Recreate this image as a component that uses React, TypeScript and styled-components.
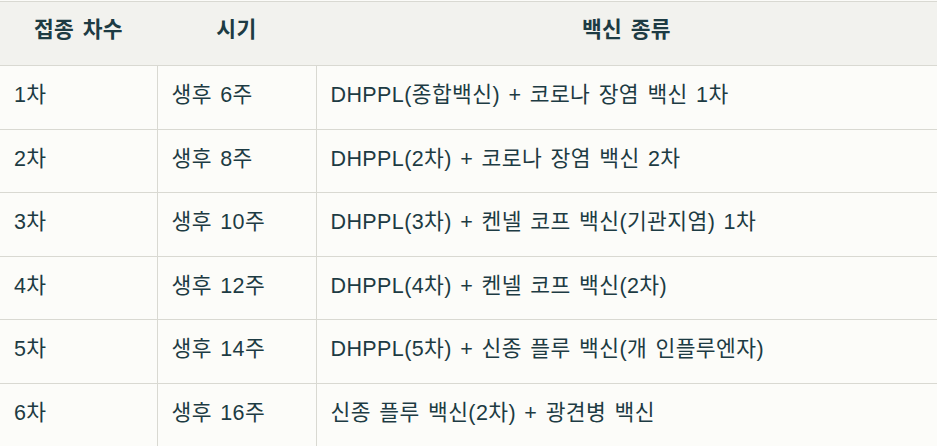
import styled, { createGlobalStyle } from "styled-components";

const GlobalStyle = createGlobalStyle`
    html, body {
        margin: 0;
        padding: 0;
        background: #fbfbf8;
    }
    body {
        font-family: "Liberation Sans", "Noto Sans CJK KR", sans-serif;
        color: #1d3b43;
    }
`;

const Wrapper = styled.div`
    padding-top: 1px;
    width: 100%;
    overflow: hidden;
`;

const Table = styled.table`
    width: 100%;
    border-collapse: collapse;
    table-layout: fixed;
    font-size: 21.5px;
    letter-spacing: 0.4px;
    word-spacing: 2px;
`;

const HeadCell = styled.th<{ $width?: number }>`
    box-sizing: border-box;
    width: ${p => (p.$width ? `${p.$width}px` : "auto")};
    background: #f2f2ee;
    font-weight: bold;
    text-align: center;
    padding: 17px 14px 23px;
    line-height: 23px;
    border-top: 1px solid #d9d9d2;
    border-bottom: 1px solid #d9d9d2;
`;

const Cell = styled.td`
    background: #fcfcf9;
    padding: 18px 14px 22px;
    line-height: 22.5px;
    border-bottom: 1px solid #d9d9d2;
    border-left: 1px solid #d9d9d2;
    white-space: nowrap;
    &:first-child {
        border-left: none;
    }
`;

const rows = [
    ["1차", "생후 6주", "DHPPL(종합백신) + 코로나 장염 백신 1차"],
    ["2차", "생후 8주", "DHPPL(2차) + 코로나 장염 백신 2차"],
    ["3차", "생후 10주", "DHPPL(3차) + 켄넬 코프 백신(기관지염) 1차"],
    ["4차", "생후 12주", "DHPPL(4차) + 켄넬 코프 백신(2차)"],
    ["5차", "생후 14주", "DHPPL(5차) + 신종 플루 백신(개 인플루엔자)"],
    ["6차", "생후 16주", "신종 플루 백신(2차) + 광견병 백신"],
];

export default function App() {
    return <Wrapper>
        <GlobalStyle/>
        <Table>
            <thead>
                <tr>
                    <HeadCell $width={157}>접종 차수</HeadCell>
                    <HeadCell $width={159}>시기</HeadCell>
                    <HeadCell>백신 종류</HeadCell>
                </tr>
            </thead>
            <tbody>
                {rows.map((r, i) => (
                    <tr key={i}>
                        <Cell>{r[0]}</Cell>
                        <Cell>{r[1]}</Cell>
                        <Cell>{r[2]}</Cell>
                    </tr>
                ))}
            </tbody>
        </Table>
    </Wrapper>
};
